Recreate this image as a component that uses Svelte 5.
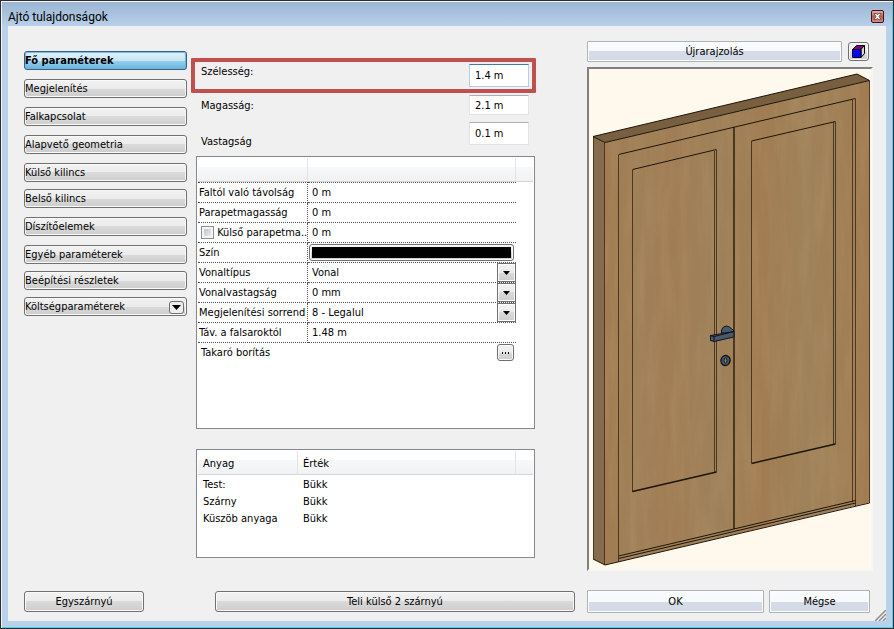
<script lang="ts">
    // Pages of the dialog; `tight` pages sit closer to the one above
    const pages = [
        { label: "Fő paraméterek" },
        { label: "Megjelenítés" },
        { label: "Falkapcsolat" },
        { label: "Alapvető geometria" },
        { label: "Külső kilincs" },
        { label: "Belső kilincs", tight: true },
        { label: "Díszítőelemek" },
        { label: "Egyéb paraméterek" },
        { label: "Beépítési részletek", tight: true },
        { label: "Költségparaméterek", tight: true, menu: true },
    ];

    const properties = [
        { id: "wall-distance", label: "Faltól való távolság", type: "text", value: "0 m" },
        { id: "parapet", label: "Parapetmagasság", type: "text", value: "0 m" },
        { id: "outer-parapet", label: "Külső parapetma..", type: "text", value: "0 m", check: true },
        { id: "color", label: "Szín", type: "color", value: "" },
        { id: "line-type", label: "Vonaltípus", type: "select", value: "Vonal" },
        { id: "line-weight", label: "Vonalvastagság", type: "select", value: "0 mm" },
        { id: "order", label: "Megjelenítési sorrend", type: "select", value: "8 - Legalul" },
        { id: "corner-distance", label: "Táv. a falsaroktól", type: "text", value: "1.48 m" },
    ];

    const materials = [
        ["Test:", "Bükk"],
        ["Szárny", "Bükk"],
        ["Küszöb anyaga", "Bükk"],
    ];

    let active = $state(0);
    let width = $state("1.4 m");
    let height = $state("2.1 m");
    let thickness = $state("0.1 m");
</script>

<main class="window">
    <header class="titlebar">
        <h1>Ajtó tulajdonságok</h1>
        <button class="close" aria-label="Bezárás">
            <svg viewBox="0 0 11 11" width="11" height="11">
                <path d="M2 2.500h2.500l1 1.500 1-1.500H9L7 5.500l2 3H6.500l-1-1.500-1 1.500H2l2-3z" fill="#fff" stroke="#4d4450" stroke-width=".8" />
            </svg>
        </button>
    </header>

    <div class="client">
        <div class="columns">
            <nav class="pages">
                {#each pages as page, i}
                    <button class="btn page" class:tight={page.tight} class:active={active === i} onclick={() => (active = i)}>
                        <span>{page.label}</span>
                        {#if page.menu}
                            <i class="menu">
                                <svg viewBox="0 0 9 5" width="9" height="5"><path d="M0 0h9L4.500 5z" /></svg>
                            </i>
                        {/if}
                    </button>
                {/each}
            </nav>

            <section class="params">
                <div class="field marked">
                    <label for="width">Szélesség:</label>
                    <input id="width" class="focused" type="text" bind:value={width} />
                </div>
                <div class="field second">
                    <label for="height">Magasság:</label>
                    <input id="height" type="text" bind:value={height} />
                </div>
                <div class="field third">
                    <label for="thickness">Vastagság</label>
                    <input id="thickness" type="text" bind:value={thickness} />
                </div>

                <div class="list properties">
                    <table>
                        <colgroup><col class="name" /><col /><col class="rest" /></colgroup>
                        <thead>
                            <tr><th></th><th></th><th></th></tr>
                        </thead>
                        <tbody>
                            {#each properties as p}
                                <tr>
                                    <td class="key">
                                        {#if p.check}
                                            <input class="check" type="checkbox" aria-label="Külső parapetmagasság" />
                                        {/if}
                                        <label for={p.id}>{p.label}</label>
                                    </td>
                                    <td class="val">
                                        {#if p.type === "text"}
                                            <input id={p.id} type="text" value={p.value} />
                                        {:else if p.type === "color"}
                                            <button id={p.id} class="btn swatch" aria-label="Szín"><i></i></button>
                                        {:else}
                                            <div class="combo">
                                                <select id={p.id}><option>{p.value}</option></select>
                                                <i class="arrow">
                                                    <svg viewBox="0 0 7 4" width="7" height="4"><path d="M0 0h7L3.500 4z" /></svg>
                                                </i>
                                            </div>
                                        {/if}
                                    </td>
                                </tr>
                            {/each}
                        </tbody>
                    </table>
                    <div class="cover">
                        <label for="cover">Takaró borítás</label>
                        <button id="cover" class="btn more" aria-label="Takaró borítás">
                            <svg viewBox="0 0 8 2" width="8" height="2"><path d="M0 0h1v2H0zM3 0h1v2H3zM6 0h1v2H6z" /></svg>
                        </button>
                    </div>
                </div>

                <div class="list materials">
                    <table>
                        <colgroup><col class="name" /><col /><col class="rest" /></colgroup>
                        <thead>
                            <tr><th>Anyag</th><th>Érték</th><th></th></tr>
                        </thead>
                        <tbody>
                            {#each materials as [part, value]}
                                <tr><td>{part}</td><td>{value}</td></tr>
                            {/each}
                        </tbody>
                    </table>
                </div>
            </section>

            <section class="preview">
                <div class="tools">
                    <button class="btn cool redraw">Újrarajzolás</button>
                    <button class="btn cube" aria-label="3D nézet">
                        <svg viewBox="0 0 13 13" width="13" height="13">
                            <path d="M.5 4.500 4.500.5h8l-3.500 4z" fill="#800080" stroke="#000" />
                            <path d="M9 4.500 12.500.5v8L9 12.500z" fill="#d8d4d0" stroke="#000" />
                            <path d="M.5 4.500H9v8H.5z" fill="#00f" stroke="#000" />
                        </svg>
                    </button>
                </div>
                <div class="canvas">
                    <svg viewBox="589 69 282 500">
                        <defs>
                            <linearGradient id="wood" x1="0" x2="1">
                                <stop offset="0" stop-color="#a17c52" />
                                <stop offset=".12" stop-color="#9f8058" />
                                <stop offset=".25" stop-color="#a17d54" />
                                <stop offset=".42" stop-color="#9e8159" />
                                <stop offset=".6" stop-color="#a17c52" />
                                <stop offset=".75" stop-color="#9f8259" />
                                <stop offset=".9" stop-color="#a07f56" />
                                <stop offset="1" stop-color="#a27b50" />
                            </linearGradient>
                            <filter id="grain" x="0" y="0" width="1" height="1">
                                <feTurbulence type="fractalNoise" baseFrequency=".1 .012" numOctaves="3" seed="4" />
                                <feColorMatrix values="0 0 0 0 .6  0 0 0 0 .4  0 0 0 0 .22  1.400 0 0 0 -.5" />
                            </filter>
                            <clipPath id="front"><path d="M605 142.500 869.500 80.500v422L605 565z" /></clipPath>
                        </defs>
                        <path d="M593 136.500 605 142.500V565l-12-6z" fill="#866c4a" />
                        <path d="M593 136.500 857 74l12.500 6.500L605 142.500z" fill="#775f40" />
                        <path d="M605 142.500 869.500 80.500v422L605 565z" fill="url(#wood)" />
                        <g clip-path="url(#front)">
                            <rect x="605" y="80" width="265" height="486" filter="url(#grain)" opacity=".25" />
                        </g>
                        <g class="soft">
                            <path d="M593.500 137v422M604.500 143v422M618.500 155v407M632.500 170v322M716.500 150v322M714.500 151v321M751.500 141v322M835.500 122v322M833.500 122v322M855.500 99v407M852.500 100v402M869.500 81v422" />
                            <path d="M734 127v402" stroke-width="2" />
                        </g>
                        <g class="edge">
                            <path d="M593 136.500 857 74l12.500 6.500L605 142.500z" />
                            <path d="M593 559l12 6 264.500-62" />
                            <path d="M618.500 154.500 855.500 98.500M632.500 169.500l84-20M751.500 141l84-19.500" />
                            <path d="M618.500 556l237-55.500M618.500 558.500l237-55.500" />
                            <path d="M632.500 491.500l84-19.500M751.500 463.500l84-19.500" stroke-width="1.500" />
                        </g>
                        <g fill="#46596d" stroke="#11151b">
                            <path d="M721.500 333v-3l2-3 3-1 3 1 2 2 2 1v3z" />
                            <path d="M710.500 335.500l12-2 11.500-2v5.500l-20 4.500-3.500-1z" />
                            <path d="M710.500 335.500l3.500 1v5M714 336.500l20-5" fill="none" />
                            <ellipse cx="725.500" cy="360.500" rx="4.500" ry="5" transform="rotate(15 725.500 360.500)" stroke-width="1.500" />
                            <ellipse cx="725.500" cy="360.500" rx="1.500" ry="2.500" fill="#a07d53" />
                        </g>
                    </svg>
                </div>
            </section>
        </div>

        <footer class="actions">
            <button class="btn single">Egyszárnyú</button>
            <button class="btn kind">Teli külső 2 szárnyú</button>
            <button class="btn cool ok">OK</button>
            <button class="btn cool cancel">Mégse</button>
        </footer>

        <svg class="grip" viewBox="0 0 11 11" width="11" height="11">
            <path d="M0 11 11 0M4 11l7-7M8 11l3-3" stroke="#8d8d8d" stroke-width="1.500" />
        </svg>
    </div>
</main>

<style>
    :global(body) {
        background: #b9d1ea;
    }

    .window {
        box-sizing: border-box;
        min-height: 100vh;
        display: flex;
        flex-direction: column;
        padding: 0 7px 7px;
        border: 1px solid #2e2c31;
        box-shadow: inset 1px 1px #f4f8fc, inset -1px -1px #4fd0f0;
        background: linear-gradient(#9ab4d2, #b9d1ea 26px);
        color: #000;
        font-family: "DejaVu Sans Condensed", "DejaVu Sans", sans-serif;
        font-size: 11px;
        line-height: 18px;
    }

    button,
    input,
    select {
        box-sizing: border-box;
        margin: 0;
        font: inherit;
        color: inherit;
    }

    .titlebar {
        display: flex;
        justify-content: space-between;
        align-items: center;
        height: 25px;
        padding: 6px 2px 0 0;
        box-sizing: border-box;
    }

    h1 {
        margin: 0;
        font: 12px/18px Roboto, sans-serif;
    }

    .close {
        width: 13px;
        height: 13px;
        padding: 0;
        border: 1px solid #43101a;
        border-radius: 2px;
        background: linear-gradient(#e8b0a6, #c4594c 50%, #d98c80);
        display: grid;
        place-items: center;
    }

    .client {
        position: relative;
        flex: 1;
        padding: 15px 13px 8px 16px;
        background: #f0f0f0;
    }

    .columns {
        display: grid;
        grid-template-columns: 163px 1fr 286px;
        align-items: start;
    }

    .btn {
        display: flex;
        align-items: center;
        justify-content: center;
        padding: 1px 0 0;
        border: 1px solid #707070;
        border-radius: 3px;
        background: linear-gradient(#f2f2f2, #ebebeb 50%, #dadada 50%, #cdcdcd);
        box-shadow: inset 0 0 0 1px #fafafa;
    }

    .btn.cool {
        border: 1px solid #adb2b5;
        border-radius: 1px;
        background: linear-gradient(#fbfcfe, #f6f8fc 50%, #d5dce8 50%, #d3dae6);
        box-shadow: inset 0 0 0 1px #fcfcfc;
    }

    /* Page buttons */
    .pages {
        display: flex;
        flex-direction: column;
        padding-top: 10px;
    }

    .page {
        height: 19px;
        padding: 1px 2px 0 0;
        justify-content: space-between;
    }

    .page + .page {
        margin-top: 9px;
    }

    .page + .tight {
        margin-top: 7px;
    }

    .page.active {
        border-color: #2c628b;
        background: linear-gradient(#e5f4fc, #c4e5f6 50%, #98d1ef 50%, #68b3db);
        box-shadow: inset 0 0 1px 1px #7fb4d3;
        font-weight: bold;
    }

    .menu {
        display: grid;
        place-items: center;
        box-sizing: border-box;
        width: 15px;
        height: 13px;
        border: 1px solid #707070;
        border-radius: 3px;
        background: #eee;
    }

    /* Size fields */
    .params {
        padding: 17px 51px 0 4px;
    }

    .field {
        display: flex;
        justify-content: space-between;
        align-items: flex-start;
        padding: 0 7px 0 10px;
    }

    .field input {
        width: 60px;
        height: 23px;
        padding: 0 5px;
        border: 1px solid #e2e3ea;
        border-top-color: #abadb3;
        background: #fff;
    }

    .field .focused {
        border-color: #b5cfe7;
        border-top-color: #3d7bad;
    }

    .marked {
        height: 35px;
        box-sizing: border-box;
        padding: 2px 3px 2px 6px;
        border: 4px solid #c0504d;
        border-radius: 1px;
    }

    .marked label {
        margin-top: -1px;
    }

    .second {
        margin-top: 2px;
    }

    .second label {
        margin-top: 2px;
    }

    .second input {
        height: 20px;
    }

    .third {
        height: 29px;
        margin-top: 7px;
    }

    .third label {
        align-self: flex-end;
    }

    /* Lists */
    .list {
        box-sizing: border-box;
        margin: 5px 1px 0 5px;
        padding: 1px;
        border: 1px solid #828790;
        background: #fff;
    }

    table {
        width: 100%;
        table-layout: fixed;
        border-collapse: separate;
        border-spacing: 0;
    }

    th {
        height: 24px;
        padding: 0;
        box-sizing: border-box;
        text-align: left;
        font-weight: normal;
        border-right: 1px solid #e3e4e6;
        border-bottom: 1px solid #d5d5d5;
        background: linear-gradient(#fff 40%, #f7f8fa 40%, #f1f2f4);
    }

    th:last-child {
        border-right: 0;
    }

    td {
        padding: 0;
    }

    .rest {
        width: 17px;
    }

    .properties {
        min-height: 273px;
    }

    .properties .name {
        width: 110px;
    }

    .properties tbody tr:first-child td {
        border-top: 1px dotted #555;
        height: 21px;
    }

    .properties td {
        box-sizing: border-box;
        height: 20px;
        border-bottom: 1px dotted #555;
        white-space: nowrap;
    }

    .key {
        padding-left: 1px;
        border-right: 1px dotted #555;
        overflow: hidden;
    }

    .check {
        appearance: none;
        width: 13px;
        height: 13px;
        margin: 0 0 0 2px;
        vertical-align: -3px;
        border: 1px solid #8e8f8f;
        background: linear-gradient(135deg, #b4bac4, #f6f6f6);
        box-shadow: inset 0 0 0 2px #f4f4f4;
    }

    .val input,
    .val select {
        display: block;
        appearance: none;
        width: 100%;
        height: 19px;
        padding: 0 4px;
        border: 0;
        border-radius: 0;
        background: transparent;
    }

    .swatch {
        width: calc(100% - 3px);
        height: 17px;
        margin: 0 1px;
        padding: 2px;
    }

    .swatch i {
        flex: 1;
        align-self: stretch;
        background: #000;
    }

    .combo {
        position: relative;
    }

    .arrow {
        position: absolute;
        top: 0;
        right: 0;
        box-sizing: border-box;
        width: 19px;
        height: 19px;
        display: grid;
        place-items: center;
        border: 1px solid #707070;
        background: linear-gradient(#f2f2f2, #ebebeb 50%, #dadada 50%, #cdcdcd);
        box-shadow: inset 0 0 0 1px #fafafa;
        pointer-events: none;
    }

    .cover {
        display: flex;
        justify-content: space-between;
        align-items: center;
        height: 19px;
        padding: 0 19px 0 3px;
    }

    .more {
        width: 17px;
        height: 17px;
        padding: 0;
    }

    .materials {
        min-height: 109px;
        margin-top: 20px;
    }

    .materials .name {
        width: 100px;
    }

    .materials th,
    .materials td {
        padding-left: 5px;
    }

    .materials th {
        padding-top: 2px;
    }

    .materials td {
        height: 17px;
        line-height: 17px;
    }

    .materials tbody tr:first-child td {
        padding-top: 1px;
    }

    /* Preview */
    .tools {
        display: flex;
        align-items: center;
        gap: 6px;
        padding-right: 4px;
    }

    .redraw {
        flex: 1;
        height: 21px;
    }

    .cube {
        width: 21px;
        height: 19px;
        padding: 0;
    }

    .canvas {
        margin-top: 5px;
        border: 2px solid;
        border-color: #808080 #f6f6f6 #f6f6f6 #808080;
        background: #fff8ec;
    }

    .canvas svg {
        display: block;
        width: 100%;
    }

    .soft {
        fill: none;
        stroke: #4a3820;
        shape-rendering: crispEdges;
    }

    .edge {
        fill: none;
        stroke: #1d150b;
    }

    .actions {
        display: flex;
        align-items: center;
        margin-top: 19px;
        padding-right: 3px;
    }

    .single {
        width: 120px;
        height: 21px;
        margin-right: 71px;
    }

    .kind {
        flex: 1;
        height: 21px;
        margin-right: 12px;
    }

    .ok {
        width: 177px;
        height: 23px;
        margin-right: 5px;
    }

    .cancel {
        width: 101px;
        height: 23px;
    }

    .grip {
        position: absolute;
        right: 0;
        bottom: 0;
    }
</style>
